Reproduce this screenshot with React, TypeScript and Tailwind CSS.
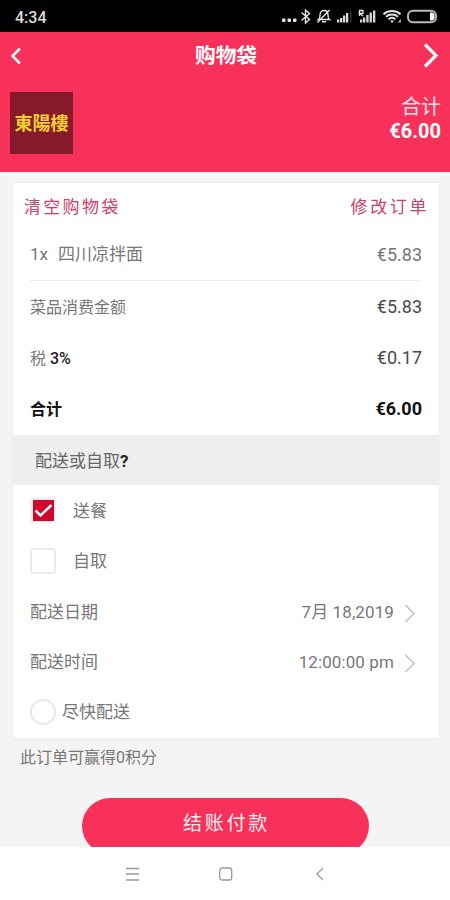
import React from 'react'

function StatusIcons() {
  return (
    <svg width="162" height="32" viewBox="0 0 162 32" fill="none" stroke="#e5e5e5" strokeWidth="1.4">
      <g fill="#e5e5e5" stroke="none">
        <rect x="2" y="18.5" width="3.5" height="3.5" rx="1" />
        <rect x="7.5" y="18.5" width="3.5" height="3.5" rx="1" />
        <rect x="13" y="18.5" width="3.5" height="3.5" rx="1" />
      </g>
      <path d="M21.5 12.5l8 7-4 3.5v-13l4 3.5-8 7" />
      <path d="M38.5 19.5c1.5-1 1.5-2.5 1.5-4.5 0-3 2-4.500 4-4.500s4 1.500 4 4.500c0 2 0 3.500 1.500 4.500zM42 21.800h4M37.500 22.500L49.500 10" />
      <g fill="#d8d8d8" stroke="none">
        <rect x="57" y="19.5" width="2.3" height="3" />
        <rect x="60" y="18" width="2.3" height="4.5" />
        <rect x="63" y="15.5" width="2.3" height="7" />
        <rect x="66" y="13" width="2.3" height="9.5" />
        <rect x="70" y="10.5" width="1.5" height="12" fill="#333" />
        <rect x="80" y="19.5" width="2.3" height="3" />
        <rect x="83" y="17.5" width="2.3" height="5" />
        <rect x="86.3" y="15" width="2.3" height="7.5" />
        <rect x="89.6" y="12.5" width="2.3" height="10" />
        <rect x="93" y="10.5" width="2.3" height="12" />
      </g>
      <path d="M79.500 16v-5.500h3.500v2.800h-3.500l3.500 2.700" strokeWidth="1.3" />
      <path d="M103.5 14.2c4.5-4.2 12.5-4.2 17 0M106 16.8c3.500-3 8.500-3 12 0M108.500 19.200c2-1.700 5-1.700 7 0" strokeWidth="2" />
      <path d="M110 20.500h4l-2 2.500z" fill="#e5e5e5" stroke="none" />
      <path d="M117.500 22.500l3.500-3.500v3.500z" fill="#aaa" stroke="none" />
      <rect x="128" y="10.8" width="28" height="11.4" rx="5" stroke="#bbb" strokeWidth="2" />
      <path d="M150 12.500h1.500a3 3 0 0 1 3 3v2a3 3 0 0 1-3 3H150z" fill="#fff" stroke="none" />
    </svg>
  )
}

function Chevron() {
  return (
    <svg width="11" height="20" viewBox="0 0 11 20" fill="none" stroke="#c6c6c6" strokeWidth="1.7">
      <path d="M0.5 2l8.500 8.500L0.500 19" />
    </svg>
  )
}

const totals = [
  { label: '菜品消费金额', value: '€5.83' },
  { label: '税', suffix: '3%', value: '€0.17' },
]

const schedule = [
  { label: '配送日期', value: '7月 18,2019' },
  { label: '配送时间', value: '12:00:00 pm' },
]

export default function App() {
  return (
    <div className="flex h-[900px] w-[450px] flex-col overflow-hidden bg-[#f4f4f4] font-['Roboto','Noto_Sans_CJK_SC',sans-serif] text-[17px] text-[#777]">
      <div className="flex h-8 shrink-0 items-center justify-between bg-black pl-[15px] pr-2">
        <span className="pt-[3px] text-base font-medium text-[#dedede]">4:34</span>
        <StatusIcons />
      </div>

      <header className="h-[140px] shrink-0 bg-[#f8315a] text-white">
        <div className="flex h-[46px] items-center justify-between pl-[10px] pr-[11px]">
          <svg width="16" height="20" viewBox="0 0 16 20" fill="none" stroke="currentColor" strokeWidth="2.5">
            <path d="M10 3.500L2.500 11l7.500 7.500" />
          </svg>
          <h1 className="pl-[3px] pt-1 text-[20.7px] font-bold">购物袋</h1>
          <svg width="16" height="26" viewBox="0 0 16 26" fill="none" stroke="currentColor" strokeWidth="3.2">
            <path d="M2 2.500l11 11-11 11" />
          </svg>
        </div>
        <div className="flex justify-between pl-[10px] pr-[9px] pt-[14px]">
          <div className="flex h-[62px] w-[63px] items-center justify-center bg-[#861a2a] pb-[3px] font-['Noto_Sans_CJK_TC',sans-serif] text-lg font-bold text-[#f3cf2b]">
            東陽樓
          </div>
          <div className="pt-[3px] text-right text-xl leading-6">
            <div className="text-[#ffe3ea]">合计</div>
            <div className="font-bold">€6.00</div>
          </div>
        </div>
      </header>

      <main className="min-h-0 flex-1 overflow-hidden pt-[11px]">
        <section className="ml-[13px] h-[555px] w-[426px] bg-white shadow-[0_0_3px_#e6e6e6]">
          <div className="flex h-[46px] items-center justify-between pl-[11px] pr-[10px] pt-[3px] tracking-[2.3px] text-[#c9426a]">
            <span>清空购物袋</span>
            <span className="tracking-[2.6px]">修改订单</span>
          </div>
          <div className="mx-[17px] flex h-[52px] items-center justify-between border-b border-[#eeece6]">
            <span className="flex gap-[10px]">
              <span>1x</span>
              <span>四川凉拌面</span>
            </span>
            <span className="text-lg">€5.83</span>
          </div>
          {totals.map((row) => (
            <div key={row.label} className="mx-[17px] flex h-[51px] items-center justify-between">
              <span className="pt-[2px] text-base">
                {row.label} {row.suffix && <span className="font-medium text-[#222]">{row.suffix}</span>}
              </span>
              <span className="text-lg text-[#4a4a4a]">{row.value}</span>
            </div>
          ))}
          <div className="mx-[17px] flex h-[52px] items-center justify-between font-bold text-[#111]">
            <span className="pt-[2px] text-base">合计</span>
            <span className="text-lg">€6.00</span>
          </div>

          <div className="flex h-[50px] items-center bg-[#eee] pl-[22px] pt-[3px] text-[#666]">
            配送或自取<span className="font-bold text-[#222]">?</span>
          </div>

          <div className="flex h-[50px] items-center pl-[17px]">
            <span className="flex h-[26px] w-[26px] items-center justify-center rounded-[3px] bg-[#f6eff0]">
              <svg width="21" height="21" viewBox="0 0 21 21" fill="none">
                <rect width="21" height="21" fill="#d0062c" />
                <path d="M2.500 10.500l5 5L18.500 5" stroke="#fff" strokeWidth="2.5" />
              </svg>
            </span>
            <span className="ml-[17px] pt-[3px]">送餐</span>
          </div>
          <div className="flex h-[51px] items-center pl-[17px]">
            <span className="h-[26px] w-[26px] rounded-[3px] border-2 border-[#ebebeb]" />
            <span className="ml-[17px] pt-[2px]">自取</span>
          </div>
          {schedule.map((row) => (
            <div key={row.label} className="flex h-[50px] items-center pl-[17px] pr-[23px] pt-[3px]">
              <span>{row.label}</span>
              <span className="ml-auto mr-[11px] tracking-[0.1px]">{row.value}</span>
              <Chevron />
            </div>
          ))}
          <div className="flex h-[51px] items-center pl-[17px]">
            <span className="h-[26px] w-[26px] rounded-full border-2 border-[#e8e8e8]" />
            <span className="ml-[6px] pt-[3px]">尽快配送</span>
          </div>
        </section>

        <p className="h-[60px] pl-5 pt-2 text-base">此订单可赢得0积分</p>

        <button className="mx-auto block h-[56px] w-[287px] rounded-full bg-[#f8315a] pb-[3px] pl-[3px] text-[19px] tracking-[2.7px] text-[#fff0f3]">
          结账付款
        </button>
      </main>

      <nav className="flex h-[53px] shrink-0 items-center justify-center gap-20 bg-white pl-[2px]">
        <svg width="14" height="14" viewBox="0 0 14 14" stroke="#999" strokeWidth="1.3">
          <path d="M1 1.500h13M1 7h13M1 13h13" />
        </svg>
        <svg width="14" height="14" viewBox="0 0 14 14" fill="none" stroke="#999" strokeWidth="1.3">
          <rect x="0.7" y="1" width="12" height="12" rx="2.5" />
        </svg>
        <svg width="14" height="14" viewBox="0 0 14 14" fill="none" stroke="#999" strokeWidth="1.3">
          <path d="M10 1L4 7l6 6" />
        </svg>
      </nav>
    </div>
  )
}
